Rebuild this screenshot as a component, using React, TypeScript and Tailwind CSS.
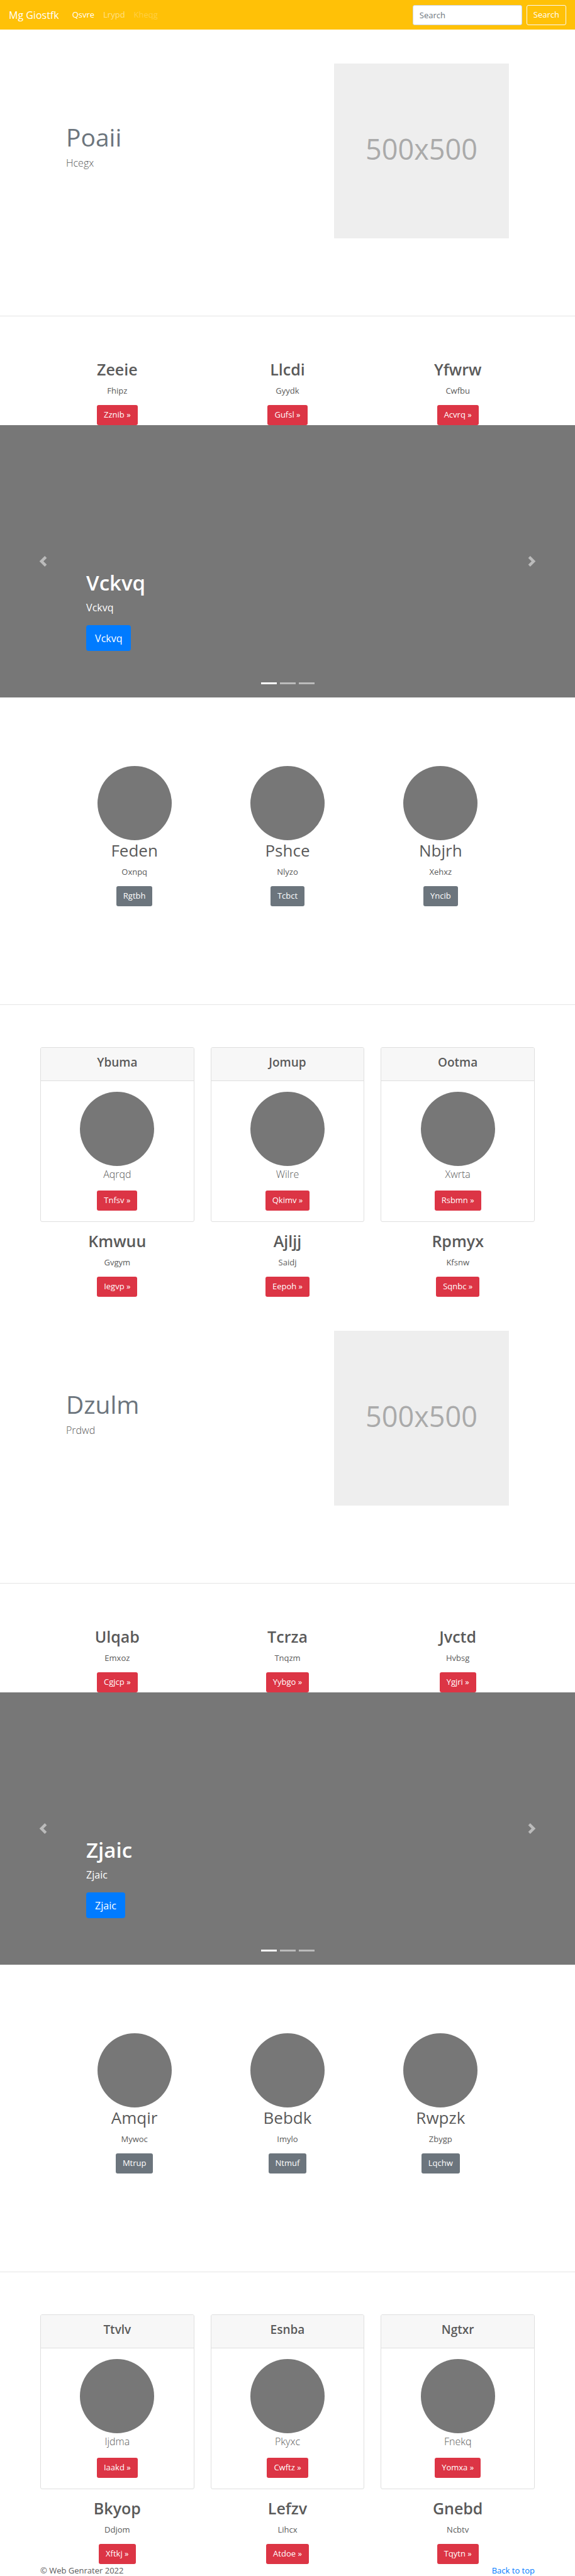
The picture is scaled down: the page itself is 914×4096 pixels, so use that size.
import React from "react";

type Item = { title: string; text: string; action: string };

type Block = {
  hero: { title: string; text: string };
  intro: Item[];
  slide: string;
  features: Item[];
  cards: Item[];
  outro: Item[];
};

const item = (title: string, text: string, action: string): Item => ({ title, text, action });

const blocks: Block[] = [
  {
    hero: { title: "Poaii", text: "Hcegx" },
    intro: [item("Zeeie", "Fhipz", "Zznib"), item("Llcdi", "Gyydk", "Gufsl"), item("Yfwrw", "Cwfbu", "Acvrq")],
    slide: "Vckvq",
    features: [item("Feden", "Oxnpq", "Rgtbh"), item("Pshce", "Nlyzo", "Tcbct"), item("Nbjrh", "Xehxz", "Yncib")],
    cards: [item("Ybuma", "Aqrqd", "Tnfsv"), item("Jomup", "Wilre", "Qkimv"), item("Ootma", "Xwrta", "Rsbmn")],
    outro: [item("Kmwuu", "Gvgym", "Iegvp"), item("Ajljj", "Saidj", "Eepoh"), item("Rpmyx", "Kfsnw", "Sqnbc")],
  },
  {
    hero: { title: "Dzulm", text: "Prdwd" },
    intro: [item("Ulqab", "Emxoz", "Cgjcp"), item("Tcrza", "Tnqzm", "Yybgo"), item("Jvctd", "Hvbsg", "Ygjri")],
    slide: "Zjaic",
    features: [item("Amqir", "Mywoc", "Mtrup"), item("Bebdk", "Imylo", "Ntmuf"), item("Rwpzk", "Zbygp", "Lqchw")],
    cards: [item("Ttvlv", "Ijdma", "Iaakd"), item("Esnba", "Pkyxc", "Cwftz"), item("Ngtxr", "Fnekq", "Yomxa")],
    outro: [item("Bkyop", "Ddjom", "Xftkj"), item("Lefzv", "Lihcx", "Atdoe"), item("Gnebd", "Ncbtv", "Tqytn")],
  },
];

function Navbar() {
  return (
    <nav className="flex h-[47px] items-center bg-[#ffc107] px-3.5 text-[13px] text-white">
      <a href="#" className="mr-[21px] text-[16px]">Mg Giostfk</a>
      <div className="flex gap-[14px]">
        <a href="#">Qsvre</a>
        <a href="#" className="text-white/50">Lrypd</a>
        <a href="#" className="text-white/25">Kheqg</a>
      </div>
      <form className="ml-auto flex gap-[7px]" onSubmit={(e) => e.preventDefault()}>
        <input
          type="search"
          aria-label="Search"
          placeholder="Search"
          className="h-8 w-[174px] rounded-[3px] border border-[#ced4da] bg-white px-2.5 text-[#495057] placeholder:text-[#6c757d]"
        />
        <button type="submit" className="h-8 rounded-[3px] border border-[#f8f9fa] px-2.5">Search</button>
      </form>
    </nav>
  );
}

function RedLink({ label }: { label: string }) {
  return (
    <a href="#" className="flex h-8 items-center rounded-[3px] bg-[#dc3545] px-[11px] text-[13px] text-white">
      {label} »
    </a>
  );
}

function Hero({ title, text }: { title: string; text: string }) {
  return (
    <section className="flex items-start justify-between px-[105px] pt-[54px] pb-[123px]">
      <div className="pt-[95px]">
        <h2 className="mb-[6px] text-[39px] leading-[44px] text-[#6c757d]">{title}</h2>
        <p className="text-[16px] leading-[26px] font-light">{text}</p>
      </div>
      <div
        role="img"
        aria-label="500x500"
        className="flex size-[278px] items-center justify-center bg-[#eeeeee] pb-[6px] text-[45px] text-[#aaaaaa]"
      >
        500x500
      </div>
    </section>
  );
}

function TextColumns({ items, className }: { items: Item[]; className: string }) {
  return (
    <section className={`grid grid-cols-3 gap-[26px] px-16 ${className}`}>
      {items.map((it) => (
        <div key={it.title} className="flex flex-col items-center">
          <h2 className="mb-2 text-[25px] leading-8 font-semibold">{it.title}</h2>
          <p className="mb-[13px] text-[13px] leading-5">{it.text}</p>
          <RedLink label={it.action} />
        </div>
      ))}
    </section>
  );
}

function Chevron({ direction }: { direction: "left" | "right" }) {
  return (
    <svg viewBox="0 0 8 8" className="size-[17px] fill-white" aria-hidden="true">
      {direction === "left" ? (
        <path d="M5.25 0l-4 4 4 4 1.5-1.5L4.25 4l2.5-2.5L5.25 0z" />
      ) : (
        <path d="M2.75 0l-1.5 1.5L3.75 4l-2.5 2.5L2.75 8l4-4-4-4z" />
      )}
    </svg>
  );
}

function Carousel({ label }: { label: string }) {
  return (
    <section className="relative h-[433px] bg-[#777777] px-[15%] pt-[230px] text-white">
      <h1 className="mb-[6px] text-[33px] leading-[41px] font-semibold">{label}</h1>
      <p className="mb-[15px] text-[16px] leading-[26px]">{label}</p>
      <a href="#" className="inline-flex h-[41px] items-center rounded-[4px] bg-[#007bff] px-[14px] text-[16px]">
        {label}
      </a>
      <button
        type="button"
        aria-label="Previous"
        className="absolute inset-y-0 left-0 flex w-[15%] items-center justify-center opacity-50"
      >
        <Chevron direction="left" />
      </button>
      <button
        type="button"
        aria-label="Next"
        className="absolute inset-y-0 right-0 flex w-[15%] items-center justify-center opacity-50"
      >
        <Chevron direction="right" />
      </button>
      <div className="absolute inset-x-0 bottom-[21px] flex justify-center gap-[5px]">
        <span className="h-[3px] w-[25px] bg-white" />
        <span className="h-[3px] w-[25px] bg-white/50" />
        <span className="h-[3px] w-[25px] bg-white/50" />
      </div>
    </section>
  );
}

function Features({ items }: { items: Item[] }) {
  return (
    <section className="grid grid-cols-3 px-[92px] pt-[109px] pb-[156px]">
      {items.map((it) => (
        <div key={it.title} className="flex flex-col items-center">
          <div className="size-[118px] rounded-full bg-[#777777]" />
          <h2 className="mb-2 text-[26px] leading-8">{it.title}</h2>
          <p className="mb-[13px] text-[13px] leading-5">{it.text}</p>
          <a href="#" className="flex h-8 items-center rounded-[3px] bg-[#6c757d] px-[11px] text-[13px] text-white">
            {it.action}
          </a>
        </div>
      ))}
    </section>
  );
}

function Cards({ items }: { items: Item[] }) {
  return (
    <section className="grid grid-cols-3 gap-[26px] px-16 pt-[67px]">
      {items.map((it) => (
        <article key={it.title} className="overflow-hidden rounded-[3px] border border-[#dfdfdf]">
          <h4 className="border-b border-[#dfdfdf] bg-[#f7f7f7] pt-[11px] pb-[17px] text-center text-[19px] leading-6 font-semibold">
            {it.title}
          </h4>
          <div className="flex flex-col items-center py-[17px]">
            <div className="size-[118px] rounded-full bg-[#777777]" />
            <p className="mb-[13px] text-[16px] leading-[26px] font-light">{it.text}</p>
            <RedLink label={it.action} />
          </div>
        </article>
      ))}
    </section>
  );
}

export default function App() {
  return (
    <div className="bg-white font-['Open_Sans','Noto_Sans',sans-serif] text-[#5a5a5a]">
      <Navbar />
      <main>
        {blocks.map((b) => (
          <React.Fragment key={b.slide}>
            <Hero {...b.hero} />
            <hr className="border-t border-[#e5e5e5]" />
            <TextColumns items={b.intro} className="pt-[68px]" />
            <Carousel label={b.slide} />
            <Features items={b.features} />
            <hr className="border-t border-[#e5e5e5]" />
            <Cards items={b.cards} />
            <TextColumns items={b.outro} className="pt-[14px]" />
          </React.Fragment>
        ))}
      </main>
      <footer className="flex justify-between px-16 text-[13px] leading-5">
        <p>© Web Genrater 2022</p>
        <a href="#" className="text-[#007bff]">Back to top</a>
      </footer>
    </div>
  );
}
